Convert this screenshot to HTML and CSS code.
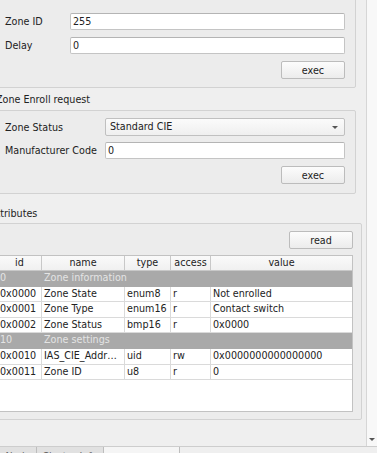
FILE: index.html
```html
<!DOCTYPE html>
<html lang="en">
<head>
    <meta charset="UTF-8">
    <title>Cluster Info</title>
    <link rel="stylesheet" href="styles.css">
</head>
<body>
    <div class="window">
        <div class="dock">
            <div class="scroll-area">
                <div class="content">

                    <!-- команды кластера -->
                    <div class="commands">
                        <div class="group group-test">
                            <div class="form form-test">
                                <label>Zone ID</label>
                                <input class="field" value="255">
                                <label>Delay</label>
                                <input class="field" value="0">
                            </div>
                            <div class="actions"><button class="btn">exec</button></div>
                        </div>

                        <div class="group-title enroll-title">Zone Enroll request</div>
                        <div class="group group-enroll">
                            <div class="form form-enroll">
                                <label>Zone Status</label>
                                <div class="combo">Standard CIE<span class="combo-arrow"></span></div>
                                <label>Manufacturer Code</label>
                                <input class="field" value="0">
                            </div>
                            <div class="actions"><button class="btn">exec</button></div>
                        </div>
                    </div>

                    <!-- атрибуты -->
                    <div class="group-title attr-title">Attributes</div>
                    <div class="group group-attr">
                        <div class="actions actions-top"><button class="btn">read</button></div>
                        <div class="table-box">
                            <div class="row head">
                                <div class="cell">id</div>
                                <div class="cell">name</div>
                                <div class="cell">type</div>
                                <div class="cell">access</div>
                                <div class="cell">value</div>
                            </div>
                            <div class="row section">
                                <div class="cell">0</div>
                                <div class="cell wide">Zone information</div>
                            </div>
                            <div class="row">
                                <div class="cell">0x0000</div>
                                <div class="cell">Zone State</div>
                                <div class="cell">enum8</div>
                                <div class="cell">r</div>
                                <div class="cell">Not enrolled</div>
                            </div>
                            <div class="row">
                                <div class="cell">0x0001</div>
                                <div class="cell">Zone Type</div>
                                <div class="cell">enum16</div>
                                <div class="cell">r</div>
                                <div class="cell">Contact switch</div>
                            </div>
                            <div class="row">
                                <div class="cell">0x0002</div>
                                <div class="cell">Zone Status</div>
                                <div class="cell">bmp16</div>
                                <div class="cell">r</div>
                                <div class="cell">0x0000</div>
                            </div>
                            <div class="row section">
                                <div class="cell">10</div>
                                <div class="cell wide">Zone settings</div>
                            </div>
                            <div class="row">
                                <div class="cell">0x0010</div>
                                <div class="cell">IAS_CIE_Addr…</div>
                                <div class="cell">uid</div>
                                <div class="cell">rw</div>
                                <div class="cell">0x0000000000000000</div>
                            </div>
                            <div class="row">
                                <div class="cell">0x0011</div>
                                <div class="cell">Zone ID</div>
                                <div class="cell">u8</div>
                                <div class="cell">r</div>
                                <div class="cell">0</div>
                            </div>
                        </div>
                    </div>

                </div>
            </div>
            <div class="vscroll">
                <div class="scroll-down"><span class="arrow"></span></div>
            </div>
        </div>

        <div class="tabbar">
            <div class="tab tab-1">Node</div>
            <div class="tab tab-2">Cluster Info</div>
            <div class="tab tab-3 selected">Bind Dropbox</div>
        </div>
    </div>
</body>
</html>
```

FILE: styles.css
```css
/* окно панели */
body {
    margin: 0;
    background: #efefef;
    font-family: "DejaVu Sans", sans-serif;
    font-size: 9.6px;
    color: #222;
}

.window {
    width: 377px;
    height: 453px;
    overflow: hidden;
    display: flex;
    flex-direction: column;
}

.dock {
    display: flex;
    height: 446px;
    flex: none;
}

.scroll-area {
    width: 366px;
    flex: none;
    overflow: hidden;
}

.content {
    width: 376px;
    margin-left: -14px;
    margin-top: -10px;
}

.commands {
    margin: 0 6px;
}

/* группы */
.group {
    border: 1px solid #d2d2d2;
    border-radius: 2px;
    background: #ececec;
}

.group-title {
    height: 12px;
    line-height: 12px;
    white-space: nowrap;
}

.enroll-title {
    margin: 6px 0 4px;
    padding-left: 4px;
}

.attr-title {
    margin: 14px 0 3px;
    padding-left: 4px;
}

.group-test {
    padding: 22px 10px 8px 12px;
}

.group-enroll {
    padding: 7px 10px 9px 12px;
}

.group-attr {
    padding: 7px 8px 7px 10px;
}

/* формы */
.form {
    display: grid;
    align-items: center;
}

.form-test {
    grid-template-columns: 65px 1fr;
    grid-template-rows: 17px 17px;
    row-gap: 7px;
}

.form-enroll {
    grid-template-columns: 100px 1fr;
    grid-template-rows: 18px 17px;
    row-gap: 6px;
}

.field {
    height: 17px;
    box-sizing: border-box;
    margin: 0;
    padding: 0 2px;
    border: 1px solid #c4c4c4;
    border-top-color: #b4b4b4;
    border-radius: 2px;
    background: #fff;
    font: inherit;
    color: #222;
    outline: none;
}

.combo {
    position: relative;
    height: 18px;
    box-sizing: border-box;
    padding-left: 4px;
    line-height: 16px;
    border: 1px solid #c0c0c0;
    border-radius: 2px;
    background: linear-gradient(#fbfbfb, #efefef);
}

.combo-arrow {
    position: absolute;
    right: 6px;
    top: 7px;
    border-left: 3px solid transparent;
    border-right: 3px solid transparent;
    border-top: 3px solid #555;
}

.actions {
    display: flex;
    justify-content: flex-end;
    margin-top: 7px;
}

.actions-top {
    margin-top: 0;
}

.btn {
    width: 64px;
    height: 18px;
    margin: 0;
    padding: 0;
    border: 1px solid #bcbcbc;
    border-radius: 2px;
    background: linear-gradient(#fcfcfc, #ececec);
    font: inherit;
    color: #222;
}

/* таблица атрибутов */
.table-box {
    margin-top: 6px;
    height: 157px;
    box-sizing: border-box;
    border: 1px solid #c2c2c2;
    background: #fff;
    overflow: hidden;
}

.row {
    display: grid;
    grid-template-columns: 44px 83px 46px 40px 1fr;
    height: 15.6px;
    box-sizing: border-box;
    border-bottom: 1px solid #dadada;
}

.cell {
    padding: 0 2px;
    line-height: 14.6px;
    white-space: nowrap;
    overflow: hidden;
    border-right: 1px solid #dadada;
}

.cell:last-child {
    border-right: none;
}

.head {
    height: 15px;
    border-bottom-color: #c8c8c8;
    background: linear-gradient(#fafafa, #f0f0f0);
}

.head .cell {
    text-align: center;
    line-height: 14px;
    border-right-color: #c8c8c8;
}

.section {
    background: #a9a9a9;
    color: #e4e4e4;
    border-bottom-color: #a9a9a9;
}

.section .cell {
    border-right: none;
}

.wide {
    grid-column: 2 / -1;
}

/* полоса прокрутки */
.vscroll {
    width: 11px;
    flex: none;
    box-sizing: border-box;
    border-left: 1px solid #d6d6d6;
    background: #f8f8f8;
    display: flex;
    flex-direction: column;
    justify-content: flex-end;
}

.scroll-down {
    height: 13px;
    display: flex;
    align-items: center;
    justify-content: center;
}

.arrow {
    border-left: 3px solid transparent;
    border-right: 3px solid transparent;
    border-top: 3px solid #555;
}

/* вкладки снизу */
.tabbar {
    flex: none;
    height: 7px;
    display: flex;
    border-top: 1px solid #cdcdcd;
}

.tab {
    flex: none;
    box-sizing: border-box;
    padding-top: 4px;
    line-height: 12px;
    text-align: center;
    white-space: nowrap;
    overflow: hidden;
    color: #666;
    background: #e1e1e1;
    border-right: 1px solid #bdbdbd;
}

.tab-1 { width: 37px; }
.tab-2 { width: 67px; }
.tab-3 { width: 76px; }

.selected {
    padding-top: 6px;
    background: #f5f5f5;
}
```
